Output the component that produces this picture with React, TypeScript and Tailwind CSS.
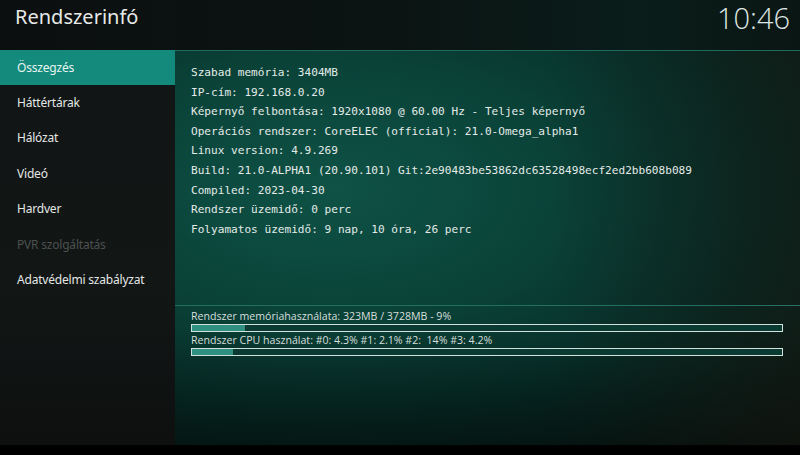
import React from "react";

const menu = [
  { label: "Összegzés", active: true },
  { label: "Háttértárak" },
  { label: "Hálózat" },
  { label: "Videó" },
  { label: "Hardver" },
  { label: "PVR szolgáltatás", disabled: true },
  { label: "Adatvédelmi szabályzat" },
];

const info = [
  "Szabad memória: 3404MB",
  "IP-cím: 192.168.0.20",
  "Képernyő felbontása: 1920x1080 @ 60.00 Hz - Teljes képernyő",
  "Operációs rendszer: CoreELEC (official): 21.0-Omega_alpha1",
  "Linux version: 4.9.269",
  "Build: 21.0-ALPHA1 (20.90.101) Git:2e90483be53862dc63528498ecf2ed2bb608b089",
  "Compiled: 2023-04-30",
  "Rendszer üzemidő: 0 perc",
  "Folyamatos üzemidő: 9 nap, 10 óra, 26 perc",
];

function UsageBar({ label, percent }: { label: string; percent: number }) {
  return (
    <div className="flex flex-col">
      <div className="h-[15px] whitespace-pre text-[10.6px] leading-[15px] text-[#d6dedb] font-['Open_Sans',sans-serif]">
        {label}
      </div>
      <div className="h-[8px] w-[592px] border border-[#cfe3dc] bg-[#0b3a33]">
        <div className="h-full bg-[#2f8f80]" style={{ width: `${percent}%` }} />
      </div>
    </div>
  );
}

export default function App() {
  return (
    <div className="relative flex h-[455px] w-[800px] flex-col overflow-hidden bg-black">
      {/* fejléc */}
      <div className="flex h-[50px] shrink-0 items-start justify-between bg-[linear-gradient(90deg,#0c0f0f_0%,#0b1413_50%,#0a1d1a_80%,#0a1613_100%)]">
        <div className="pl-[15px] pt-[3px] text-[20px] leading-[28px] text-[#e6e9e8] font-['Noto_Sans',sans-serif]">
          Rendszerinfó
        </div>
        <div className="pr-[10px] pt-[1px] text-[29px] leading-[34px] font-light text-[#dfe5e2] font-['Open_Sans',sans-serif]">
          10:46
        </div>
      </div>

      <div className="flex h-[395px] shrink-0">
        {/* oldalsáv */}
        <div className="flex w-[175px] shrink-0 flex-col bg-[linear-gradient(180deg,#111515_0%,#121615_60%,#0e1010_100%)] font-['Noto_Sans',sans-serif]">
          {menu.map((item) => (
            <div
              key={item.label}
              className={`flex h-[35.4px] items-center pl-[17px] text-[12px] tracking-[-0.2px] ${
                item.active
                  ? "bg-[#138a7c] text-[#e8f3f0]"
                  : item.disabled
                  ? "text-[#4c5150]"
                  : "text-[#e4e7e6]"
              }`}
            >
              {item.label}
            </div>
          ))}
        </div>

        {/* tartalom */}
        <div className="relative flex flex-1 flex-col border-t border-[#1f6a5c] bg-[radial-gradient(ellipse_at_25%_35%,#0f5246_0%,#0a4238_35%,#072e28_65%,#0d1a16_100%)]">
          <div className="pointer-events-none absolute inset-0 bg-[linear-gradient(180deg,transparent_0%,transparent_70%,rgba(0,0,0,0.45)_100%)]" />
          <div className="pointer-events-none absolute inset-0 bg-[linear-gradient(90deg,transparent_0%,transparent_60%,rgba(20,22,16,0.55)_100%)]" />
          <div className="relative flex h-[254px] flex-col pl-[16px] pt-[12px] font-['DejaVu_Sans_Mono',monospace] text-[11.1px] text-[#e4ebe8]">
            {info.map((line) => (
              <div key={line} className="h-[19.6px] leading-[19.6px] whitespace-pre">
                {line}
              </div>
            ))}
          </div>
          <div className="relative h-[1px] bg-[#236f61]" />
          <div className="relative flex flex-col gap-[1px] pl-[16px] pt-[3px]">
            <UsageBar label="Rendszer memóriahasználata: 323MB / 3728MB - 9%" percent={9} />
            <UsageBar label="Rendszer CPU használat: #0: 4.3% #1: 2.1% #2:  14% #3: 4.2%" percent={7} />
          </div>
        </div>
      </div>

      <div className="h-[10px] shrink-0 bg-black" />
    </div>
  );
}
